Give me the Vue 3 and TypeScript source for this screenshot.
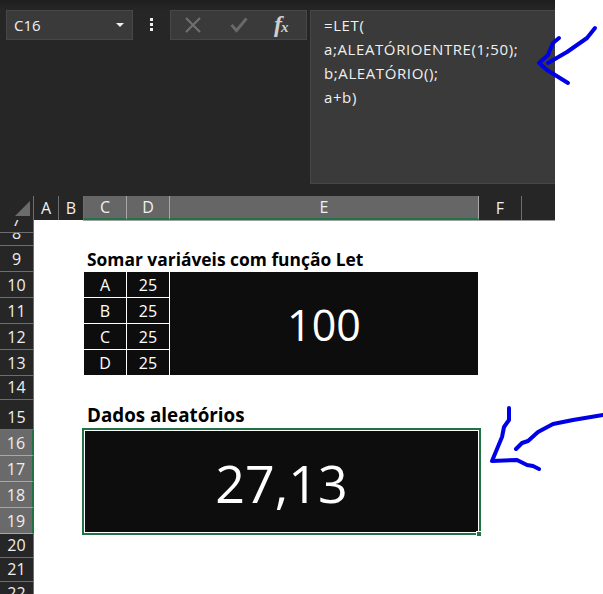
<script setup lang="ts">
interface RowHead {
  label: string;
  height: number;
  selected?: boolean;
}

const columns = [
  { label: 'A', width: 25 },
  { label: 'B', width: 25 },
  { label: 'C', width: 43, selected: true },
  { label: 'D', width: 43, selected: true },
  { label: 'E', width: 309, selected: true },
  { label: 'F', width: 43 },
];

const rows: RowHead[] = [
  { label: '7', height: 13 },
  { label: '8', height: 13 },
  { label: '9', height: 26 },
  { label: '10', height: 26 },
  { label: '11', height: 26 },
  { label: '12', height: 26 },
  { label: '13', height: 26 },
  { label: '14', height: 24 },
  { label: '15', height: 30 },
  { label: '16', height: 26, selected: true },
  { label: '17', height: 26, selected: true },
  { label: '18', height: 26, selected: true },
  { label: '19', height: 26, selected: true },
  { label: '20', height: 24 },
  { label: '21', height: 24 },
  { label: '22', height: 24 },
];

const values = [
  ['A', '25'],
  ['B', '25'],
  ['C', '25'],
  ['D', '25'],
];

const formula = ['=LET(', 'a;ALEATÓRIOENTRE(1;50);', 'b;ALEATÓRIO();', 'a+b)'];
</script>

<template>
  <div class="page">
    <div class="ribbon">
      <div class="formula-bar">
        <div class="name-box">
          <span>C16</span>
          <i class="caret"></i>
        </div>
        <div class="dots"><i></i><i></i><i></i></div>
        <div class="actions">
          <svg class="act cancel" width="16" height="16" viewBox="0 0 16 16">
            <path d="M1 1 15 15M15 1 1 15" stroke="#6f6f6f" stroke-width="2.2" fill="none" />
          </svg>
          <svg class="act confirm" width="18" height="16" viewBox="0 0 18 16">
            <path d="M1.5 8 6.5 13.5 16.5 1.5" stroke="#6a6a6a" stroke-width="2.8" fill="none" />
          </svg>
          <span class="fx">f<em>x</em></span>
        </div>
        <div class="formula">
          <div v-for="line in formula" :key="line">{{ line }}</div>
        </div>
      </div>
      <div class="col-heads">
        <div class="corner"><i></i></div>
        <div
          v-for="col in columns"
          :key="col.label"
          class="col-head"
          :class="{ selected: col.selected }"
          :style="{ width: col.width + 'px' }"
        >
          {{ col.label }}
        </div>
      </div>
    </div>

    <div class="body">
      <div class="row-heads">
        <div
          v-for="row in rows"
          :key="row.label"
          class="row-head"
          :class="{ selected: row.selected }"
          :style="{ height: row.height + 'px' }"
        >
          {{ row.label }}
        </div>
      </div>
      <div class="sheet">
        <div class="freeze-line"></div>
        <div class="title first">Somar variáveis com função Let</div>
        <div class="table">
          <template v-for="(pair, i) in values" :key="pair[0]">
            <div class="cell">{{ pair[0] }}</div>
            <div class="cell">{{ pair[1] }}</div>
            <div v-if="i === 0" class="total">100</div>
          </template>
        </div>
        <div class="title second">Dados aleatórios</div>
        <div class="selection">
          <div class="random">27,13</div>
          <i class="handle"></i>
        </div>
      </div>
    </div>

    <svg class="ink" width="603" height="594" viewBox="0 0 603 594">
      <g fill="none" stroke="#0000e6" stroke-width="4" stroke-linecap="round" stroke-linejoin="round">
        <path d="M595 28 587 38 567 52 548 63" />
        <path d="M559 38 553 43 548 55 539 63 547 70 568 83" />
        <path d="M509 408 509 420 504 427 502 437 492 461 517 460 527 465 533 466 539 469" />
        <path d="M516 449 522 443 528 441 538 432 553 424 573 420 603 415" />
      </g>
    </svg>
  </div>
</template>

<style>
html,
body {
  margin: 0;
  background: #fff;
}
</style>

<style scoped>
.page {
  position: relative;
  width: 603px;
  height: 594px;
  overflow: hidden;
  background: #fff;
  font-family: "Open Sans", "Noto Sans", sans-serif;
}

.ribbon {
  width: 555px;
  height: 220px;
  background: #262626;
  color: #f0f0f0;
}

.formula-bar {
  display: flex;
  align-items: flex-start;
  height: 196px;
  padding: 10px 0 0 6px;
  box-sizing: border-box;
  background: linear-gradient(#1e1e1e, #262626 10px);
}

.name-box {
  display: flex;
  align-items: center;
  justify-content: space-between;
  width: 127px;
  height: 30px;
  padding: 0 8px 0 7px;
  box-sizing: border-box;
  background: #3a3a3a;
  border: 1px solid #474747;
  font-size: 15px;
}

.caret {
  border: 4px solid transparent;
  border-top: 4px solid #eee;
  border-bottom: 0;
}

.dots {
  display: flex;
  flex-direction: column;
  gap: 2px;
  width: 37px;
  height: 30px;
  padding: 8px 0 0 17px;
  box-sizing: border-box;
}

.dots i {
  width: 3px;
  height: 3px;
  background: #eee;
}

.actions {
  display: flex;
  align-items: center;
  width: 137px;
  height: 30px;
  box-sizing: border-box;
  padding-left: 14px;
  background: #3a3a3a;
  border: 1px solid #474747;
}

.act.cancel {
  margin-right: 29px;
}

.act.confirm {
  margin-right: 26px;
}

.fx {
  font-family: "Liberation Serif", serif;
  font-style: italic;
  font-weight: 700;
  font-size: 24px;
  line-height: 24px;
  color: #cfcfcf;
}

.fx em {
  font-size: 15px;
  margin-left: -1px;
}

.formula {
  width: 245px;
  height: 174px;
  margin-left: 3px;
  padding: 2px 0 0 13px;
  box-sizing: border-box;
  background: #3a3a3a;
  border: 1px solid #474747;
  border-right: 0;
  font-size: 15px;
  letter-spacing: 0.6px;
  line-height: 24px;
}

.col-heads {
  display: flex;
  height: 24px;
}

.corner {
  position: relative;
  width: 34px;
  flex: none;
  box-sizing: border-box;
  border-right: 1px solid #6e6e6e;
}

.corner i {
  position: absolute;
  right: 3px;
  bottom: 4px;
  border-style: solid;
  border-width: 0 0 15px 15px;
  border-color: transparent transparent #6b6b6b transparent;
}

.col-head {
  display: flex;
  flex: none;
  align-items: center;
  justify-content: center;
  box-sizing: border-box;
  height: 24px;
  border-right: 1px solid #6e6e6e;
  font-size: 16px;
}

.col-head.selected {
  background: #666;
  border-right-color: #a8a8a8;
  border-bottom: 2px solid #217346;
}

.body {
  display: flex;
  height: 374px;
}

.row-heads {
  flex: none;
  width: 34px;
  overflow: hidden;
}

/* labels sit on the bottom edge so squeezed rows clip from the top, like Excel */
.row-head {
  display: flex;
  align-items: flex-end;
  justify-content: center;
  box-sizing: border-box;
  padding-bottom: 2px;
  background: #262626;
  border-right: 1px solid #6e6e6e;
  border-bottom: 1px solid #6e6e6e;
  color: #eee;
  font-size: 16px;
  line-height: 20px;
  overflow: hidden;
}

.row-head.selected {
  background: #6a6a6a;
  border-right: 2px solid #217346;
  border-bottom-color: #a8a8a8;
}

.sheet {
  flex: 1;
  padding-left: 50px;
}

.freeze-line {
  width: 472px;
  height: 1px;
  margin-left: -1px;
  background: #a0a0a0;
}

.title {
  font-weight: 700;
  color: #000;
  white-space: nowrap;
}

.title.first {
  margin-top: 26px;
  padding: 0 0 1px 3px;
  font-size: 17.4px;
  line-height: 24px;
}

.table {
  display: grid;
  grid-template-columns: 42px 42px 308px;
  grid-template-rows: repeat(4, 25px);
  gap: 1px;
  width: 394px;
  background: #fff;
}

.cell {
  display: flex;
  align-items: center;
  justify-content: center;
  background: #0d0d0d;
  color: #fff;
  font-size: 16px;
}

.total {
  grid-column: 3;
  grid-row: 1 / span 4;
  display: flex;
  align-items: center;
  justify-content: center;
  padding-top: 1px;
  background: #0d0d0d;
  color: #fff;
  font-size: 43px;
}

.title.second {
  margin-top: 28px;
  padding-left: 3px;
  font-size: 18.8px;
  line-height: 25px;
}

.selection {
  position: relative;
  width: 399px;
  height: 107px;
  margin-left: -2px;
  box-sizing: border-box;
  border: 2px solid #217346;
  background: #fff;
  padding: 1px;
}

.random {
  display: flex;
  align-items: center;
  justify-content: center;
  box-sizing: border-box;
  height: 100%;
  padding-top: 2px;
  background: #0d0d0d;
  color: #fff;
  font-size: 52px;
}

.handle {
  position: absolute;
  right: -2px;
  bottom: -3px;
  width: 4px;
  height: 4px;
  background: #217346;
  border-top: 1px solid #fff;
  border-left: 1px solid #fff;
}

.ink {
  position: absolute;
  left: 0;
  top: 0;
  pointer-events: none;
}
</style>
